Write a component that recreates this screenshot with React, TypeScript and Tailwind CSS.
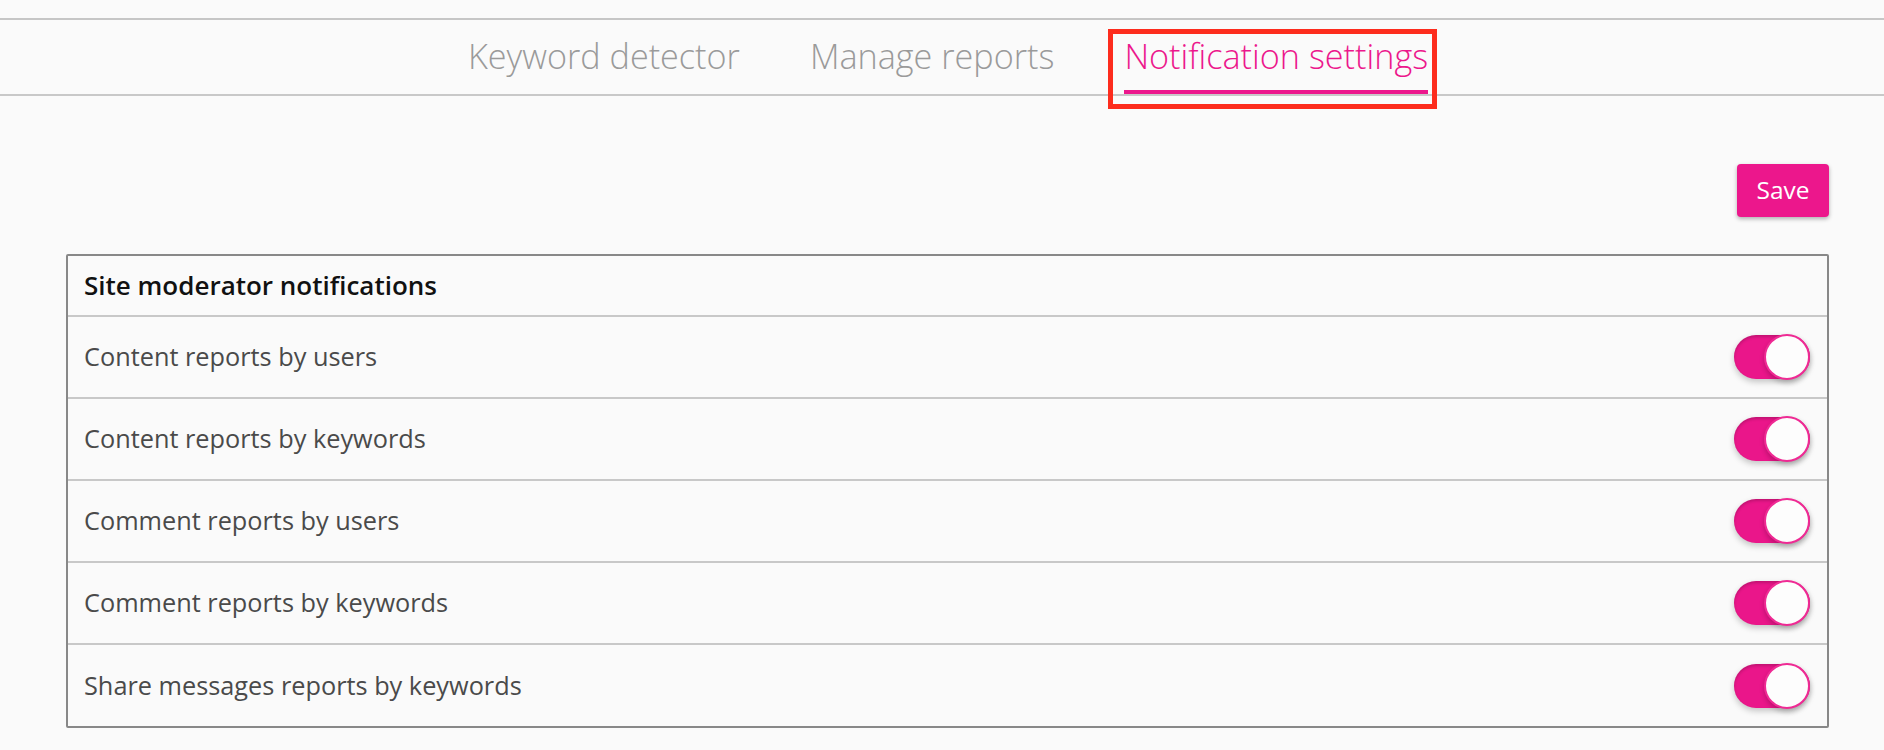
import React from "react";

// Tabs
// ━━━━━━━━━━━━━━━━━━━━━━━━━━━━━━━━━━━━━━━━━━━━━━━━━━━━━━━━━━━━━━━━━━━━━━

const tabs = ["Keyword detector", "Manage reports", "Notification settings"];
const active = "Notification settings";

function TabBar() {
  return (
    <div className="flex justify-center pl-[12px] border-b-2 border-[#c8c8c8] h-[76px]">
      {tabs.map((tab) => {
        const on = tab === active;
        return (
          <div key={tab} className="relative px-[35px]">
            <div
              className={`pt-[13px] pb-[11px] border-b-4 text-[34.2px] font-light leading-[46px] whitespace-nowrap ${
                on ? "border-[#ec178c] text-[#ec178c]" : "border-transparent text-[#9a9a9a]"
              }`}
            >
              {tab}
            </div>
            {on && (
              <div className="absolute left-[19px] right-[26px] top-[9px] h-[80px] border-[5px] border-[#fd2c1d] pointer-events-none" />
            )}
          </div>
        );
      })}
    </div>
  );
}

// Toggle
// ━━━━━━━━━━━━━━━━━━━━━━━━━━━━━━━━━━━━━━━━━━━━━━━━━━━━━━━━━━━━━━━━━━━━━━

function Toggle() {
  return (
    <div className="relative w-[76px] h-[44px] rounded-full bg-[#ea168a] shadow-[0_3px_6px_rgba(0,0,0,0.22),inset_0_2px_3px_rgba(0,0,0,0.18)]">
      <div className="absolute right-0 top-1/2 -translate-y-1/2 w-[46px] h-[46px] rounded-full bg-[#fdfdfd] border-2 border-[#ef2a94] shadow-[0_3px_5px_rgba(0,0,0,0.2)]" />
    </div>
  );
}

// Notification card
// ━━━━━━━━━━━━━━━━━━━━━━━━━━━━━━━━━━━━━━━━━━━━━━━━━━━━━━━━━━━━━━━━━━━━━━

const rows = [
  "Content reports by users",
  "Content reports by keywords",
  "Comment reports by users",
  "Comment reports by keywords",
  "Share messages reports by keywords",
];

function NotificationCard() {
  return (
    <div className="border-2 border-[#888888] rounded-[2px]">
      <div className="h-[61px] flex items-center px-[16px] border-b-2 border-[#c8c8c8] text-[26px] font-semibold text-[#111111]">
        Site moderator notifications
      </div>
      {rows.map((row, i) => (
        <div
          key={row}
          className={`flex items-center justify-between pl-[16px] pr-[17px] ${
            i < rows.length - 1 ? "h-[82px] border-b-2 border-[#c8c8c8]" : "h-[81px]"
          }`}
        >
          <span className="text-[25.3px] text-[#4a4a4a]">{row}</span>
          <Toggle />
        </div>
      ))}
    </div>
  );
}

export default function App() {
  return (
    <div
      className="min-h-[750px] bg-[#fafafa]"
      style={{ fontFamily: '"Open Sans", "Noto Sans", sans-serif' }}
    >
      <div className="h-[20px] border-b-2 border-[#c6c6c6]" />
      <TabBar />
      <div className="pl-[66px] pr-[55px]">
        <div className="flex justify-end pt-[68px] pb-[37px]">
          <button className="w-[92px] h-[53px] rounded-[4px] bg-[#ec178c] text-white text-[24.5px] shadow-[0_2px_4px_rgba(0,0,0,0.3)]">
            Save
          </button>
        </div>
        <NotificationCard />
      </div>
    </div>
  );
}
